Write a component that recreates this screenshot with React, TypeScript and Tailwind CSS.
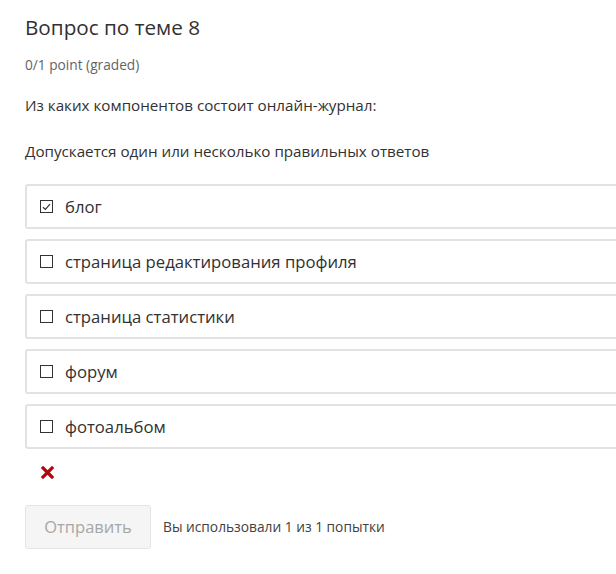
import { useState } from 'react';

const options = [
  'блог',
  'страница редактирования профиля',
  'страница статистики',
  'форум',
  'фотоальбом',
];

export default function App() {
  const [checked, setChecked] = useState<string[]>(['блог']);

  const toggle = (opt: string) =>
    setChecked((prev) => (prev.includes(opt) ? prev.filter((o) => o !== opt) : [...prev, opt]));

  return (
    <div className="h-[574px] w-[616px] overflow-hidden bg-white font-['Open_Sans',sans-serif] text-[#313131]">
      <div className="pl-[25px] pt-[13px]">
        <h3 className="text-[20.7px] leading-[28px] font-normal">Вопрос по теме 8</h3>
        <div className="mt-[15px] text-[13.7px] leading-[18px] text-[#646464]">0/1 point (graded)</div>

        <p className="mt-[21px] text-[15.2px] leading-[20px]">Из каких компонентов состоит онлайн-журнал:</p>
        <p className="mt-[26px] text-[15.2px] leading-[20px]">Допускается один или несколько правильных ответов</p>

        <ul className="mt-[23px] w-[640px] space-y-[10px]">
          {options.map((opt) => (
            <li key={opt}>
              <label className="flex h-[45px] cursor-pointer items-center rounded-[3px] border-2 border-[#e2e2e2] pl-[13px] text-[16.7px]">
                <span className="flex h-[13px] w-[13px] items-center justify-center border border-[#333] bg-white">
                  {checked.includes(opt) && (
                    <svg width="9" height="8" viewBox="0 0 9 8" fill="none">
                      <path d="M1 4.2 L3.4 6.5 L8 1.2" stroke="#333" strokeWidth="1.2" />
                    </svg>
                  )}
                </span>
                <input
                  type="checkbox"
                  className="hidden"
                  checked={checked.includes(opt)}
                  onChange={() => toggle(opt)}
                />
                <span className="ml-[12px]">{opt}</span>
              </label>
            </li>
          ))}
        </ul>

        <div className="mt-[17px] pl-[16px]">
          <svg width="13" height="13" viewBox="0 0 13 13">
            <path d="M2 2 L11 11 M11 2 L2 11" stroke="#b20610" strokeWidth="3.2" strokeLinecap="square" />
          </svg>
        </div>

        <div className="mt-[26px] flex items-center gap-[12px]">
          <button
            disabled
            className="h-[44px] w-[126px] rounded-[3px] border border-[#e4e4e4] bg-[#f5f5f5] text-[16.5px] text-[#a7a7a7]"
          >
            Отправить
          </button>
          <span className="text-[13.75px] text-[#414141]">Вы использовали 1 из 1 попытки</span>
        </div>
      </div>
    </div>
  );
}
